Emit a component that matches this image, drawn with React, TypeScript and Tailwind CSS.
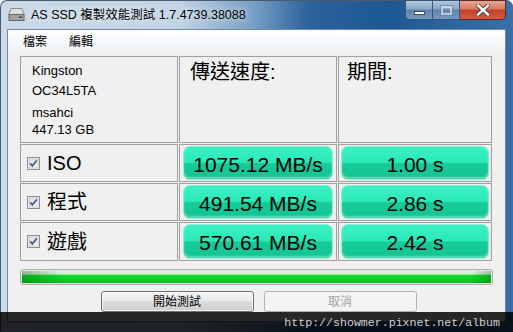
import React from "react";

function Check() {
  return (
    <svg width="13" height="13" viewBox="0 0 13 13" className="shrink-0">
      <defs>
        <linearGradient id="cbg" x1="0" y1="0" x2="1" y2="1">
          <stop offset="0" stopColor="#dcdcdc" />
          <stop offset="1" stopColor="#fafafa" />
        </linearGradient>
      </defs>
      <rect x="0.5" y="0.5" width="12" height="12" fill="#f4f4f4" stroke="#8e8f8f" />
      <rect x="2" y="2" width="9" height="9" fill="url(#cbg)" stroke="#c4c6c9" strokeWidth="0.8" />
      <path d="M3.2 6.4 L5.4 8.9 L9.8 3.4" fill="none" stroke="#4a5c8f" strokeWidth="1.7" />
    </svg>
  );
}

function Green({ children }: { children: React.ReactNode }) {
  return (
    <div className="h-full w-full rounded-[7px] border border-[#86eed3] bg-[linear-gradient(180deg,#3df0c3_0%,#2ae9b7_48%,#17cb98_52%,#12c492_100%)] shadow-[inset_0_-2px_2px_rgba(255,255,255,0.35)] flex items-center justify-center pt-[2px] text-[21px] leading-none">
      {children}
    </div>
  );
}

const rows = [
  { label: "ISO", speed: "1075.12 MB/s", time: "1.00 s" },
  { label: "程式", speed: "491.54 MB/s", time: "2.86 s" },
  { label: "遊戲", speed: "570.61 MB/s", time: "2.42 s" },
];

export default function App() {
  return (
    <div className="relative w-[513px] h-[332px] overflow-hidden bg-white font-['Liberation_Sans','Noto_Sans_CJK_TC',sans-serif] text-black">
      <div className="flex flex-col w-full h-full rounded-t-[7px] border-t border-l border-[#4b5b6c] bg-[linear-gradient(90deg,#cbdae8_0%,#c1d3e4_35%,#7aa0c6_49%,#2a629c_60%,#1d5892_76%,#2f66a0_90%,#3a6ea6_100%)]">
        {/* title bar */}
        <div className="h-[28px] flex items-start shrink-0">
          <svg width="17" height="15" viewBox="0 0 17 15" className="mt-[6px] ml-[7px]">
            <path d="M3 1.5 H14 L16 7.5 H1 Z" fill="#dedede" stroke="#8a8a8a" />
            <rect x="1" y="7.5" width="15" height="6" fill="#a2a2a2" stroke="#666" />
            <rect x="11" y="9.5" width="3" height="1.5" fill="#4d4d4d" />
          </svg>
          <div className="ml-[6px] mt-[7px] text-[12.5px] leading-[15px] [text-shadow:0_0_6px_#fff]">
            AS SSD 複製效能測試 1.7.4739.38088
          </div>
          <div className="ml-auto mr-[7px] flex h-[20px] -mt-[1px]">
            <div className="w-[28px] h-full rounded-bl-[5px] border border-[#3a5677] bg-[linear-gradient(180deg,#b3c8dd_0%,#88a6c6_45%,#5f83ab_50%,#7799c0_100%)] flex items-center justify-center">
              <div className="w-[11px] h-[4px] bg-white border border-[#3b4a5c] mt-[5px]" />
            </div>
            <div className="w-[27px] h-full border-y border-r border-[#3a5677] bg-[linear-gradient(180deg,#b3c8dd_0%,#88a6c6_45%,#5f83ab_50%,#7799c0_100%)] flex items-center justify-center">
              <div className="w-[11px] h-[9px] border-[2px] border-[#dfe7ef] outline outline-1 outline-[#667f9b] opacity-70" />
            </div>
            <div className="w-[46px] h-full rounded-br-[5px] border-y border-r border-[#5a2a24] bg-[linear-gradient(180deg,#e9a797_0%,#d9775f_45%,#c4402a_50%,#d65a3e_100%)] flex items-center justify-center">
              <svg width="14" height="12" viewBox="0 0 14 12">
                <path d="M2 1.5 L12 10.5 M12 1.5 L2 10.5" stroke="#3b3b3b" strokeWidth="4.2" strokeLinecap="square" />
                <path d="M2 1.5 L12 10.5 M12 1.5 L2 10.5" stroke="#ffffff" strokeWidth="2.4" strokeLinecap="square" />
              </svg>
            </div>
          </div>
        </div>

        {/* client */}
        <div className="flex-1 flex flex-col ml-[6px] mr-[7px] mb-[10px] border border-[#6f8aa7] bg-[#f0f0f0]">
          {/* menu */}
          <div className="h-[21px] shrink-0 flex items-center gap-[22px] pl-[15px] pt-[2px] text-[12px] bg-[linear-gradient(180deg,#fdfdfe_0%,#f6f8fb_60%,#eef2f6_100%)]">
            <span>檔案</span>
            <span>編輯</span>
          </div>

          <div className="flex flex-col px-[12px] pt-[5px]">
            <div className="grid grid-cols-[158px_158px_154px] grid-rows-[87px_38px_38px_39px] gap-[1px]">
              <div className="border border-[#a0a0a0] pl-[11px] pt-[6px] text-[13px] leading-[15px]">
                <div>Kingston</div>
                <div className="mt-[5px]">OC34L5TA</div>
                <div className="mt-[7px]">msahci</div>
                <div className="mt-[2px]">447.13 GB</div>
              </div>
              <div className="border border-[#a0a0a0] pl-[10px] pt-[3px] text-[20px] leading-[24px]">傳送速度:</div>
              <div className="border border-[#a0a0a0] pl-[8px] pt-[3px] text-[20px] leading-[24px]">期間:</div>

              {rows.map((r) => (
                <React.Fragment key={r.label}>
                  <div className="border border-[#a0a0a0] flex items-center pl-[6px] gap-[7px]">
                    <Check />
                    <span className="text-[20px] leading-none">{r.label}</span>
                  </div>
                  <div className="border border-[#a0a0a0] pt-[1px] pb-[1px] pl-[3px] pr-[3px]">
                    <Green>{r.speed}</Green>
                  </div>
                  <div className="border border-[#a0a0a0] pt-[1px] pb-[1px] pl-[2px] pr-[2px]">
                    <Green>{r.time}</Green>
                  </div>
                </React.Fragment>
              ))}
            </div>

            {/* progress */}
            <div className="mt-[8px] h-[16px] rounded-[3px] border border-[#b0b0b0] bg-[#e6e6e6] p-[1px]">
              <div className="relative h-full w-full rounded-[1px] bg-[linear-gradient(180deg,#e3f5e4_0%,#c8eecb_28%,#17d834_32%,#09d226_65%,#05bd1f_100%)]">
                <div className="absolute inset-y-0 left-0 w-[40px] bg-[linear-gradient(90deg,rgba(0,80,0,0.35),rgba(0,80,0,0))]" />
                <div className="absolute inset-y-0 right-0 w-[20px] bg-[linear-gradient(270deg,rgba(0,80,0,0.3),rgba(0,80,0,0))]" />
              </div>
            </div>

            {/* buttons */}
            <div className="mt-[6px] flex justify-center gap-[10px] pl-[4px]">
              <div className="w-[153px] h-[21px] rounded-[3px] border border-[#707070] bg-[linear-gradient(180deg,#f3f3f3_0%,#ebebeb_50%,#dddddd_50%,#cfcfcf_100%)] shadow-[inset_0_0_0_1px_rgba(255,255,255,0.7)] flex items-center justify-center text-[12px]">
                開始測試
              </div>
              <div className="w-[153px] h-[21px] rounded-[3px] border border-[#adb2b5] bg-[#f4f4f4] flex items-center justify-center text-[12px] text-[#a3a3a3]">
                取消
              </div>
            </div>
          </div>
        </div>
      </div>

      {/* watermark overlay */}
      <div className="absolute left-0 right-0 bottom-0 h-[20px] bg-black/[0.84] flex items-center justify-end pr-[13px] pt-[2px] font-['Liberation_Mono',monospace] text-[11.6px] text-[#d0d0d0]">
        http://showmer.pixnet.net/album
      </div>
    </div>
  );
}
